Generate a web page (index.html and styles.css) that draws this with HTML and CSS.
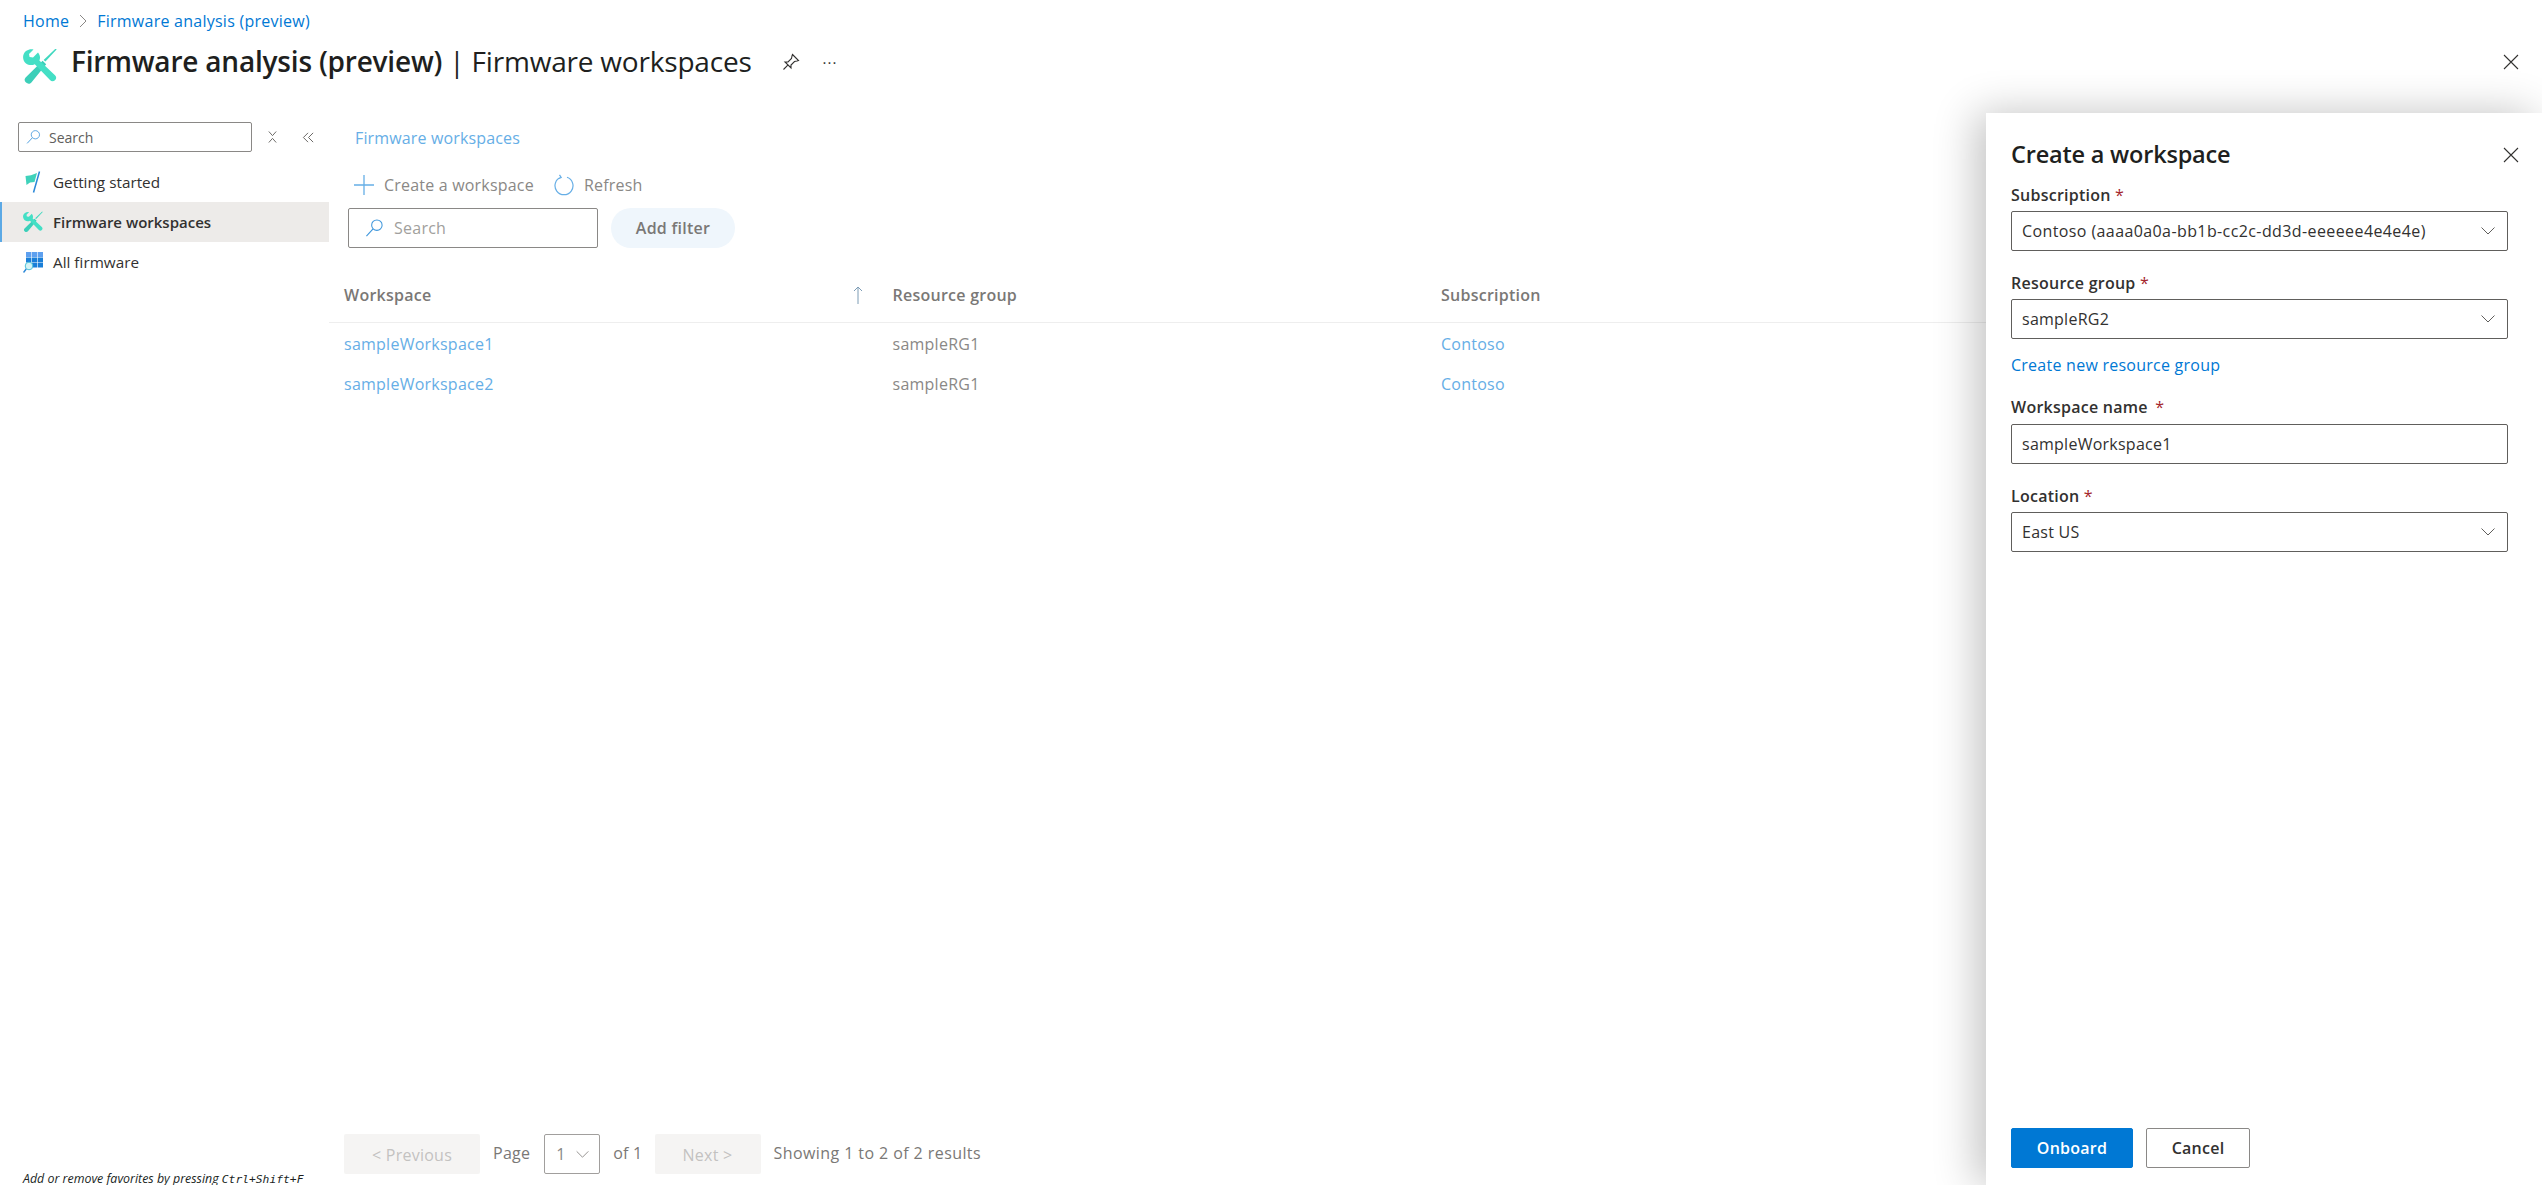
FILE: index.html
```html
<!DOCTYPE html>
<html lang="en">
<head>
<meta charset="utf-8">
<title>Firmware workspaces</title>
<link rel="stylesheet" href="styles.css">
</head>
<body>
<svg class="defs" width="0" height="0">
  <defs>
    <symbol id="tools" viewBox="0 0 34 35">
      <path d="M33.6 .4 L22.4 12.6 L20.6 11 L32.6 -.4 Z" fill="#3fd8bf"/>
      <path d="M19.6 11.8 L23.2 15.2 L8.4 33.4 C7 35 4.8 35.2 3 33.6 C1.2 32 1.2 30 2.6 28.4 Z" fill="#3ccfb9"/>
      <path d="M10.5 .6 C6 -.4 1.6 2 .4 6 C-.5 9.2 .6 12.4 3 14.4 C5.6 16.4 9 16.6 11.8 15.2 L27 31 C28.4 32.6 30.4 32.6 32 31.2 C33.6 29.6 33.6 27.6 32 26.2 L16.4 11.6 C17.6 8.8 17 5.6 15 3.4 L10 8.4 L6.6 8 L6 5 Z" fill="#44dfc5"/>
    </symbol>
    <symbol id="search" viewBox="0 0 20 20">
      <circle cx="12.5" cy="7" r="5.5" fill="none" stroke="#3f97dc" stroke-width="1.1"/>
      <path d="M8.5 11 L1.5 18.5" fill="none" stroke="#3f97dc" stroke-width="1.2"/>
    </symbol>
    <symbol id="chev" viewBox="0 0 16 10">
      <path d="M1.5 1.5 L8 8 L14.5 1.5" fill="none" stroke="currentColor" stroke-width="1"/>
    </symbol>
    <symbol id="close" viewBox="0 0 16 16">
      <path d="M1 1 L15 15 M15 1 L1 15" fill="none" stroke="currentColor" stroke-width="1.1"/>
    </symbol>
  </defs>
</svg>

<div class="page">
  <header class="head">
    <nav class="crumbs">
      <a class="crumb">Home</a>
      <svg class="crumb-sep" viewBox="0 0 8 14"><path d="M1 1 L7 7 L1 13" fill="none" stroke="#8a8886" stroke-width="1"/></svg>
      <a class="crumb">Firmware analysis (preview)</a>
    </nav>
    <div class="title-row">
      <svg class="title-icon"><use href="#tools"/></svg>
      <h1 class="title"><b class="title-strong">Firmware analysis (preview)</b> | Firmware workspaces</h1>
      <svg class="pin" viewBox="0 0 18 18"><path d="M10.5 1.5 L16.5 7.5 L15 8 L12.5 8.5 L9 12 L9 15 L3 9 L6 9 L9.5 5.5 L10 3 Z M5.8 12.2 L1.5 16.5" fill="none" stroke="#323130" stroke-width="1.1"/></svg>
      <span class="dots">···</span>
      <svg class="page-close"><use href="#close"/></svg>
    </div>
  </header>

  <div class="body">
    <aside class="side">
      <div class="side-top">
        <div class="side-search">
          <svg class="side-search-icon"><use href="#search"/></svg>
          <span class="side-search-text">Search</span>
        </div>
        <svg class="mini-x" viewBox="0 0 12 14"><path d="M2 1 L6 5.5 L10 1 M2 13 L6 8.5 L10 13" fill="none" stroke="#605e5c" stroke-width="1"/></svg>
        <svg class="mini-coll" viewBox="0 0 14 14"><path d="M6.5 2 L1.5 7 L6.5 12 M12 2 L7 7 L12 12" fill="none" stroke="#605e5c" stroke-width="1"/></svg>
      </div>
      <ul class="nav">
        <li class="nav-item">
          <svg class="nav-icon" viewBox="0 0 20 22"><path d="M2.5 5 L8 4.2 L14 2 L11.5 11 L7 11.5 L3.5 14 Z" fill="#3fd2bb"/><path d="M16.5 .5 L10.5 21.5" stroke="#2b88d8" stroke-width="1.5" fill="none"/></svg>
          <span>Getting started</span>
        </li>
        <li class="nav-item nav-item-on">
          <svg class="nav-icon"><use href="#tools"/></svg>
          <span>Firmware workspaces</span>
        </li>
        <li class="nav-item">
          <svg class="nav-icon" viewBox="0 0 20 22">
            <path d="M3 1h5.4v5H3zM9 1h5.4v5H9zM15 1h5v5h-5z" fill="#5ea0ef"/>
            <path d="M3 6.5h5.4v5H3zM9 6.5h5.4v5H9zM15 6.5h5v5h-5zM9 12h5.4v4.5H9zM15 12h5v4.5h-5z" fill="#1a7fd8"/>
            <circle cx="6" cy="15" r="3.8" fill="#d6f3f5" stroke="#4fc3d9" stroke-width="1"/>
            <path d="M3.2 18 L.5 21.5" stroke="#2b88d8" stroke-width="1.4"/>
          </svg>
          <span>All firmware</span>
        </li>
      </ul>
      <p class="side-tip">Add or remove favorites by pressing <kbd class="keys">Ctrl+Shift+F</kbd></p>
    </aside>

    <main class="main">
      <a class="sub-crumb">Firmware workspaces</a>
      <div class="toolbar">
        <button class="tool tool-create">
          <svg class="tool-plus" viewBox="0 0 20 20"><path d="M10 0 V20 M0 10 H20" stroke="#66aee6" stroke-width="1.3" fill="none"/></svg>
          <span>Create a workspace</span>
        </button>
        <button class="tool">
          <svg class="tool-refresh" viewBox="0 0 20 22"><path d="M7 3.2 A9 9 0 1 0 13 3.2 M5.5 .8 L7.2 3.4 L4.5 4.8" fill="none" stroke="#66aee6" stroke-width="1.2"/></svg>
          <span>Refresh</span>
        </button>
      </div>
      <div class="filters">
        <div class="filter-search">
          <svg class="filter-search-icon"><use href="#search"/></svg>
          <span>Search</span>
        </div>
        <button class="add-filter">Add filter</button>
      </div>
      <div class="table">
        <div class="thead">
          <div class="th th-sort"><span>Workspace</span>
            <svg class="sort" viewBox="0 0 10 18"><path d="M5 18 V1 M1 5 L5 1 L9 5" fill="none" stroke="#7d9cb5" stroke-width="1"/></svg>
          </div>
          <div class="th">Resource group</div>
          <div class="th">Subscription</div>
        </div>
        <div class="tr"><a class="td td-link">sampleWorkspace1</a><span class="td">sampleRG1</span><a class="td td-link">Contoso</a></div>
        <div class="tr"><a class="td td-link">sampleWorkspace2</a><span class="td">sampleRG1</span><a class="td td-link">Contoso</a></div>
      </div>
      <div class="pager">
        <button class="pager-btn pager-prev">&lt; Previous</button>
        <span class="pager-text">Page</span>
        <div class="pager-select"><span>1</span><svg class="pager-chev"><use href="#chev"/></svg></div>
        <span class="pager-text">of 1</span>
        <button class="pager-btn pager-next">Next &gt;</button>
        <span class="pager-text pager-count">Showing 1 to 2 of 2 results</span>
      </div>
    </main>

    <section class="panel">
      <div class="panel-head">
        <h2 class="panel-title">Create a workspace</h2>
        <svg class="panel-close"><use href="#close"/></svg>
      </div>
      <div class="field">
        <label class="label">Subscription <i class="req">*</i></label>
        <div class="control control-long"><span>Contoso (aaaa0a0a-bb1b-cc2c-dd3d-eeeeee4e4e4e)</span><svg class="chev"><use href="#chev"/></svg></div>
      </div>
      <div class="field">
        <label class="label">Resource group <i class="req">*</i></label>
        <div class="control"><span>sampleRG2</span><svg class="chev"><use href="#chev"/></svg></div>
      </div>
      <a class="new-group">Create new resource group</a>
      <div class="field field-name">
        <label class="label">Workspace name <i class="req req-wide">*</i></label>
        <div class="control"><span>sampleWorkspace1</span></div>
      </div>
      <div class="field">
        <label class="label">Location <i class="req">*</i></label>
        <div class="control"><span>East US</span><svg class="chev"><use href="#chev"/></svg></div>
      </div>
      <div class="panel-actions">
        <button class="btn btn-primary">Onboard</button>
        <button class="btn">Cancel</button>
      </div>
    </section>
  </div>
</div>
</body>
</html>
```

FILE: styles.css
```css
* { box-sizing: border-box; }
html, body { margin: 0; height: 100%; overflow: hidden; background: #fff; }
body { font-family: "Open Sans", "Noto Sans", sans-serif; font-size: 16px; color: #323130; letter-spacing: .25px; }
button { font: inherit; letter-spacing: inherit; background: none; border: 0; padding: 0; color: inherit; }
ul { list-style: none; margin: 0; padding: 0; }
h1, h2, p { margin: 0; font-weight: 400; }
.defs { position: absolute; }
.page { height: 100vh; display: flex; flex-direction: column; }

.head { height: 113px; flex: none; padding: 9px 0 0 23px; }
.crumbs { height: 24px; display: flex; align-items: center; gap: 10px; }
.crumb { color: #0078d4; }
.crumb-sep { width: 8px; height: 14px; }
.title-row { display: flex; align-items: center; height: 52px; margin-top: 3px; padding-right: 23px; }
.title-icon { width: 34px; height: 35px; margin: 8px 14px 0 0; flex: none; }
.title { font-size: 28px; color: #201f1e; letter-spacing: -.2px; white-space: nowrap; margin-top: -2px; }
.title-strong { font-weight: 600; }
.pin { width: 18px; height: 18px; margin-left: 30px; }
.dots { margin-left: 23px; font-size: 15px; color: #323130; font-weight: 400; letter-spacing: 1px; }
.page-close { width: 16px; height: 16px; margin-left: auto; color: #323130; }

.body { flex: 1; min-height: 0; display: flex; position: relative; }

.side { width: 329px; flex: none; display: flex; flex-direction: column; }
.side-top { display: flex; align-items: center; padding: 9px 0 0 18px; }
.side-search { width: 234px; height: 30px; border: 1px solid #8a8886; border-radius: 2px; display: flex; align-items: center; padding-left: 7px; color: #605e5c; font-size: 14px; letter-spacing: 0; }
.side-search-icon { width: 15px; height: 16px; margin-right: 8px; }
.side-search-text { color: #605e5c; }
.mini-x { width: 11px; height: 14px; margin-left: 15px; }
.mini-coll { width: 13px; height: 13px; margin-left: 24px; }
.nav { margin-top: 10px; }
.nav-item { height: 40px; display: flex; align-items: center; padding-left: 23px; font-size: 15.3px; letter-spacing: 0; }
.nav-item-on { background: #edebe9; box-shadow: inset 2px 0 0 #5ca9e5; font-weight: 600; font-size: 15px; }
.nav-icon { width: 20px; height: 22px; margin-right: 10px; flex: none; }
.side-tip { margin: auto 0 -5px 23px; line-height: 20px; font-size: 12.4px; font-style: italic; color: #201f1e; letter-spacing: 0; }
.keys { font-family: "DejaVu Sans Mono", monospace; font-size: 11.3px; }

.main { flex: 1; min-width: 0; display: flex; flex-direction: column; color: #8a8886; }
.sub-crumb { margin: 13px 0 0 26px; line-height: 24px; color: #66aee6; letter-spacing: .15px; }
.toolbar { display: flex; height: 32px; margin: 19px 0 0 25px; letter-spacing: .2px; }
.tool { display: flex; align-items: center; color: #8a8886; }
.tool-create { margin-right: 20px; }
.tool-plus { width: 20px; height: 20px; margin-right: 10px; }
.tool-refresh { width: 20px; height: 22px; margin-right: 10px; }
.filters { display: flex; margin: 7px 0 0 19px; gap: 13px; }
.filter-search { width: 250px; height: 40px; border: 1px solid #8a8886; border-radius: 2px; display: flex; align-items: center; padding-left: 16px; color: #a19f9d; }
.filter-search-icon { width: 19px; height: 20px; margin-right: 10px; }
.add-filter { width: 124px; height: 40px; border-radius: 20px; background: #eff6fc; color: #7a7876; font-weight: 600; }

.table { margin-top: 20px; }
.thead, .tr { display: grid; grid-template-columns: 548.5px 548.5px 1fr; padding-left: 15px; }
.thead { height: 55px; align-items: center; border-bottom: 1px solid #eeeeee; }
.th { font-weight: 600; color: #7a7876; }
.th-sort { display: flex; align-items: center; justify-content: space-between; padding-right: 30px; }
.sort { width: 10px; height: 18px; }
.tr { height: 40px; align-items: center; padding-top: 2px; }
.td { color: #8a8886; }
.td-link { color: #66aee6; }

.pager { margin: auto 0 11px 15px; display: flex; align-items: center; height: 40px; }
.pager-text { color: #7a7876; margin-top: -3px; }
.pager-count { letter-spacing: .42px; }
.pager-btn { height: 40px; padding-top: 2px; background: #f3f2f1; opacity: .8; color: #b5b3b1; border-radius: 2px; }
.pager-prev { width: 136px; margin-right: 13px; }
.pager-next { width: 106px; margin: 0 13px 0 12px; }
.pager-select { width: 56px; height: 40px; margin: 0 13px 0 14px; border: 1px solid #a19f9d; border-radius: 2px; display: flex; align-items: center; justify-content: space-between; padding: 0 9px 0 11px; color: #8a8886; }
.pager-chev { width: 15px; height: 9px; color: #8a8886; }

.panel { position: absolute; top: 0; bottom: 0; left: 1986px; right: 0; background: #fff; box-shadow: -10px 0 40px rgba(0,0,0,.24); padding: 25px 34px 17px 25px; display: flex; flex-direction: column; }
.panel-head { height: 34px; display: flex; align-items: center; justify-content: space-between; }
.panel-title { font-size: 23.5px; font-weight: 600; color: #201f1e; letter-spacing: -.2px; margin-top: -2px; }
.panel-close { width: 16px; height: 16px; margin-right: -11px; color: #323130; }
.field { margin-top: 11px; }
.field + .field { margin-top: 20px; }
.label { display: block; height: 24px; line-height: 24px; font-weight: 600; margin-bottom: 4px; }
.field-name .label { margin-bottom: 5px; }
.req { color: #a4262c; font-style: normal; font-weight: 400; }
.req-wide { margin-left: 3px; }
.control { height: 40px; border: 1px solid #605e5c; border-radius: 2px; display: flex; align-items: center; justify-content: space-between; padding: 0 11px 0 10px; }
.control-long { letter-spacing: .4px; }
.chev { width: 16px; height: 10px; color: #605e5c; }
.new-group { margin-top: 14px; line-height: 24px; height: 24px; color: #0078d4; }
.field-name { margin-top: 18px; }
.panel-actions { margin-top: auto; display: flex; gap: 13px; }
.btn { height: 40px; width: 104px; border: 1px solid #8a8886; border-radius: 2px; font-weight: 600; color: #323130; background: #fff; }
.btn-primary { width: 122px; background: #0078d4; border-color: #0078d4; color: #fff; }
```
